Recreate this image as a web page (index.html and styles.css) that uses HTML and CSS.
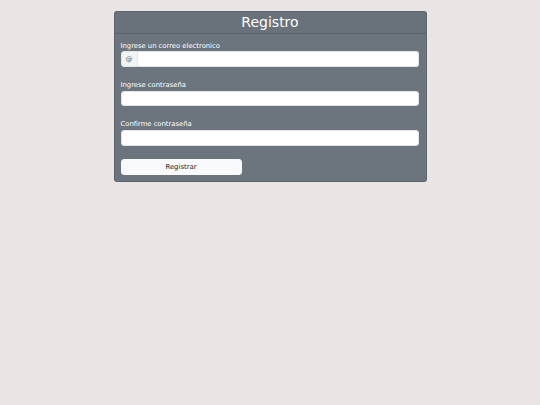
FILE: index.html
```html
<!DOCTYPE html>
<html lang="es">
<head>
<meta charset="utf-8">
<title>Registro</title>
<link rel="stylesheet" href="styles.css">
</head>
<body>
<div class="card">
  <div class="card-header">Registro</div>
  <form class="card-body">
    <div class="group">
      <label class="label">Ingrese un correo electronico</label>
      <div class="input-group">
        <span class="addon">@</span>
        <input class="input input-joined" type="email">
      </div>
    </div>
    <div class="group">
      <label class="label">Ingrese contraseña</label>
      <input class="input" type="password">
    </div>
    <div class="group group-last">
      <label class="label">Confirme contraseña</label>
      <input class="input" type="password">
    </div>
    <button class="btn" type="button">Registrar</button>
  </form>
</div>
</body>
</html>
```

FILE: styles.css
```css
html, body {
  margin: 0;
  padding: 0;
}
body {
  background: #e9e5e4;
  font-family: "DejaVu Sans", sans-serif;
}
.card {
  box-sizing: border-box;
  width: 313px;
  margin: 10.5px auto 0;
  background: #6c757d;
  border: 1px solid rgba(0, 0, 0, 0.13);
  border-radius: 3px;
  color: #fff;
}
.card-header {
  height: 21px;
  line-height: 21px;
  text-align: center;
  font-size: 14px;
  border-bottom: 1px solid rgba(0, 0, 0, 0.13);
  background: rgba(0, 0, 0, 0.02);
}
.card-body {
  display: flex;
  flex-direction: column;
  padding: 8px 6.5px 6.5px 6px;
  margin: 0;
}
.group {
  display: flex;
  flex-direction: column;
  margin-bottom: 14.4px;
}
.group-last {
  margin-bottom: 13.2px;
}
.label {
  font-size: 6.8px;
  line-height: 9px;
  margin-bottom: 0.6px;
  color: #fff;
}
.input-group {
  display: flex;
}
.input {
  box-sizing: border-box;
  height: 15.5px;
  width: 100%;
  margin: 0;
  padding: 0 4px;
  background: #fff;
  border: 1px solid #e3e6e9;
  border-radius: 3px;
  outline: none;
}
.addon {
  box-sizing: border-box;
  flex: 0 0 17px;
  height: 15.5px;
  display: flex;
  align-items: center;
  justify-content: center;
  background: #f1f3f5;
  border: 1px solid #e3e6e9;
  border-right: 1px solid #e3e6e9;
  border-radius: 3px 0 0 3px;
  color: #495057;
  font-size: 6.5px;
}
.input-joined {
  flex: 1;
  border-left: none;
  border-radius: 0 3px 3px 0;
}
.btn {
  box-sizing: border-box;
  width: 121px;
  height: 16px;
  margin: 0;
  padding: 0;
  background: #f8f9fa;
  border: 1px solid #f8f9fa;
  border-radius: 3px;
  color: #212529;
  font-family: "DejaVu Sans", sans-serif;
  font-size: 6.9px;
  line-height: 14px;
  text-align: center;
}
```
